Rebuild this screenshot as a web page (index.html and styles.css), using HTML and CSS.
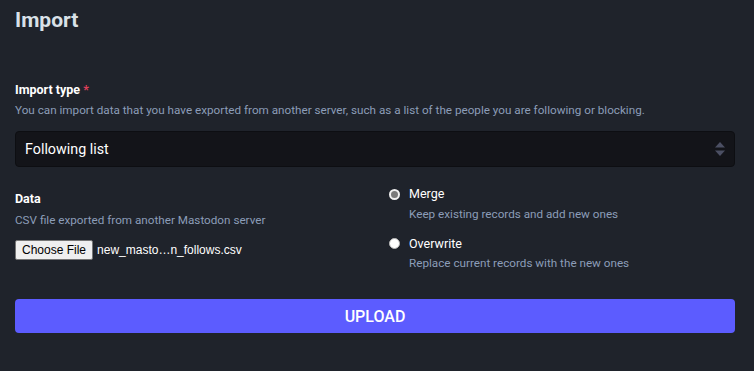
FILE: index.html
```html
<!DOCTYPE html>
<html>
<head>
<meta charset="utf-8">
<link rel="stylesheet" href="styles.css">
</head>
<body>
<main class="page">
  <h1 class="title">Import</h1>
  <div class="field">
    <div class="label">Import type <span class="req">*</span></div>
    <div class="hint">You can import data that you have exported from another server, such as a list of the people you are following or blocking.</div>
    <div class="select">
      <span class="select-text">Following list</span>
      <svg class="arrows" width="12" height="16" viewBox="0 0 12 16"><path d="M6 1 L11 6.5 H1 Z" fill="#4b4f63"/><path d="M6 15 L11 9.5 H1 Z" fill="#4b4f63"/></svg>
    </div>
  </div>
  <div class="cols">
    <div class="col">
      <div class="label">Data</div>
      <div class="hint">CSV file exported from another Mastodon server</div>
      <div class="file">
        <span class="file-btn">Choose File</span>
        <span class="file-name">new_masto…n_follows.csv</span>
      </div>
    </div>
    <div class="col radios">
      <div class="radio-item">
        <div class="radio-row"><span class="radio checked"></span><span class="radio-label">Merge</span></div>
        <div class="radio-hint">Keep existing records and add new ones</div>
      </div>
      <div class="radio-item">
        <div class="radio-row"><span class="radio"></span><span class="radio-label">Overwrite</span></div>
        <div class="radio-hint">Replace current records with the new ones</div>
      </div>
    </div>
  </div>
  <button class="upload">UPLOAD</button>
</main>
</body>
</html>
```
FILE: styles.css
```css
html, body {
  margin: 0;
  padding: 0;
  background: #1f232b;
}
body {
  font-family: Roboto, "Noto Sans", sans-serif;
  color: #d9e1e8;
}
.page {
  padding: 0 19px 0 15px;
}
.title {
  margin: 0;
  padding-top: 7px;
  font-size: 21px;
  line-height: 26px;
  font-weight: 700;
  color: #d9e1e8;
}
.field {
  margin-top: 48px;
}
.label {
  font-size: 12.5px;
  font-weight: 700;
  line-height: 18px;
  color: #ffffff;
}
.req {
  color: #df405a;
}
.hint {
  margin-top: 3px;
  font-size: 11.7px;
  line-height: 16px;
  color: #8c9db8;
}
.select {
  margin-top: 13px;
  height: 34px;
  background: #131419;
  border: 1px solid #0d0e12;
  border-radius: 4px;
  display: flex;
  align-items: center;
  justify-content: space-between;
  padding: 0 8px 0 9px;
}
.select-text {
  font-size: 14.3px;
  color: #ffffff;
}
.cols {
  margin-top: 23px;
  display: grid;
  grid-template-columns: 1fr 1fr;
  gap: 12px;
}
.col .hint {
  margin-top: 4px;
}
.file {
  margin-top: 12px;
  display: flex;
  align-items: center;
  gap: 4px;
}
.file-btn {
  font-family: "Liberation Sans", Arial, sans-serif;
  font-size: 12px;
  color: #000;
  background: #efefef;
  border: 1px solid #767676;
  border-radius: 2px;
  padding: 1px 6px;
  line-height: 16px;
}
.file-name {
  font-family: "Liberation Sans", Arial, sans-serif;
  font-size: 12px;
  color: #ffffff;
}
.radios {
  padding-left: 8px;
  margin-top: -5px;
}
.radio-item + .radio-item {
  margin-top: 13px;
}
.radio-row {
  display: flex;
  align-items: center;
  gap: 9px;
}
.radio {
  width: 11px;
  height: 11px;
  border-radius: 50%;
  background: #ffffff;
  box-sizing: border-box;
  border: 1px solid #b8b8b8;
}
.radio.checked {
  background: #7a7a7a;
  border: 2.5px solid #f0f0f0;
}
.radio-label {
  font-size: 12.5px;
  color: #ffffff;
  line-height: 18px;
}
.radio-hint {
  margin-top: 2.5px;
  padding-left: 20px;
  font-size: 11.7px;
  line-height: 16px;
  color: #8c9db8;
}
.upload {
  display: block;
  width: 100%;
  margin-top: 28px;
  height: 34px;
  border: none;
  border-radius: 4px;
  background: #5c5cff;
  color: #ffffff;
  font-family: Roboto, sans-serif;
  font-size: 16px;
  font-weight: 500;
  cursor: pointer;
}
```
